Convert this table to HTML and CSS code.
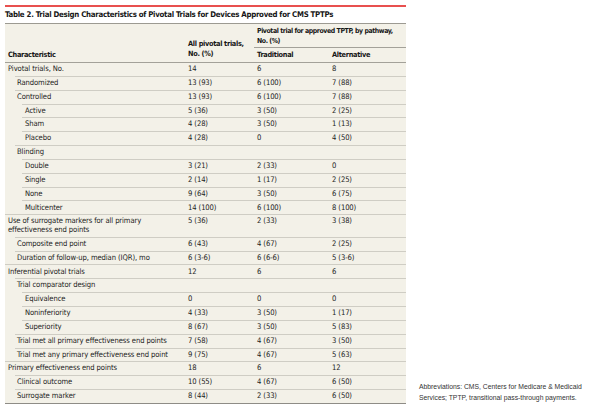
FILE: index.html
```html
<!DOCTYPE html>
<html lang="en">
<head>
<meta charset="utf-8">
<title>Table 2</title>
<link rel="stylesheet" href="styles.css">
</head>
<body>
<div class="page">
  <div class="figure">
    <div class="rule"></div>
    <div class="title">Table 2. Trial Design Characteristics of Pivotal Trials for Devices Approved for CMS TPTPs</div>
    <div class="table">
      <div class="thead">
        <div class="h-char">Characteristic</div>
        <div class="h-all">All pivotal trials,<br>No. (%)</div>
        <div class="h-group">Pivotal trial for approved TPTP, by pathway,<br>No. (%)</div>
        <div class="h-sub">Traditional</div>
        <div class="h-sub">Alternative</div>
      </div>
      <div class="row l0 first"><div class="c0">Pivotal trials, No.</div><div class="c">14</div><div class="c">6</div><div class="c">8</div></div>
      <div class="row l1"><div class="c0">Randomized</div><div class="c">13 (93)</div><div class="c">6 (100)</div><div class="c">7 (88)</div></div>
      <div class="row l1"><div class="c0">Controlled</div><div class="c">13 (93)</div><div class="c">6 (100)</div><div class="c">7 (88)</div></div>
      <div class="row l2"><div class="c0">Active</div><div class="c">5 (36)</div><div class="c">3 (50)</div><div class="c">2 (25)</div></div>
      <div class="row l2"><div class="c0">Sham</div><div class="c">4 (28)</div><div class="c">3 (50)</div><div class="c">1 (13)</div></div>
      <div class="row l2"><div class="c0">Placebo</div><div class="c">4 (28)</div><div class="c">0</div><div class="c">4 (50)</div></div>
      <div class="row l1"><div class="c0">Blinding</div><div class="c"></div><div class="c"></div><div class="c"></div></div>
      <div class="row l2"><div class="c0">Double</div><div class="c">3 (21)</div><div class="c">2 (33)</div><div class="c">0</div></div>
      <div class="row l2"><div class="c0">Single</div><div class="c">2 (14)</div><div class="c">1 (17)</div><div class="c">2 (25)</div></div>
      <div class="row l2"><div class="c0">None</div><div class="c">9 (64)</div><div class="c">3 (50)</div><div class="c">6 (75)</div></div>
      <div class="row l2"><div class="c0">Multicenter</div><div class="c">14 (100)</div><div class="c">6 (100)</div><div class="c">8 (100)</div></div>
      <div class="row l0"><div class="c0">Use of surrogate markers for all primary<br>effectiveness end points</div><div class="c">5 (36)</div><div class="c">2 (33)</div><div class="c">3 (38)</div></div>
      <div class="row l1"><div class="c0">Composite end point</div><div class="c">6 (43)</div><div class="c">4 (67)</div><div class="c">2 (25)</div></div>
      <div class="row l1"><div class="c0">Duration of follow-up, median (IQR), mo</div><div class="c">6 (3-6)</div><div class="c">6 (6-6)</div><div class="c">5 (3-6)</div></div>
      <div class="row l0"><div class="c0">Inferential pivotal trials</div><div class="c">12</div><div class="c">6</div><div class="c">6</div></div>
      <div class="row l1"><div class="c0">Trial comparator design</div><div class="c"></div><div class="c"></div><div class="c"></div></div>
      <div class="row l2"><div class="c0">Equivalence</div><div class="c">0</div><div class="c">0</div><div class="c">0</div></div>
      <div class="row l2"><div class="c0">Noninferiority</div><div class="c">4 (33)</div><div class="c">3 (50)</div><div class="c">1 (17)</div></div>
      <div class="row l2"><div class="c0">Superiority</div><div class="c">8 (67)</div><div class="c">3 (50)</div><div class="c">5 (83)</div></div>
      <div class="row l1"><div class="c0">Trial met all primary effectiveness end points</div><div class="c">7 (58)</div><div class="c">4 (67)</div><div class="c">3 (50)</div></div>
      <div class="row l1"><div class="c0">Trial met any primary effectiveness end point</div><div class="c">9 (75)</div><div class="c">4 (67)</div><div class="c">5 (63)</div></div>
      <div class="row l0"><div class="c0">Primary effectiveness end points</div><div class="c">18</div><div class="c">6</div><div class="c">12</div></div>
      <div class="row l1"><div class="c0">Clinical outcome</div><div class="c">10 (55)</div><div class="c">4 (67)</div><div class="c">6 (50)</div></div>
      <div class="row l1 last"><div class="c0">Surrogate marker</div><div class="c">8 (44)</div><div class="c">2 (33)</div><div class="c">6 (50)</div></div>
    </div>
  </div>
  <div class="note">Abbreviations: CMS, Centers for Medicare &amp; Medicaid<br>Services; TPTP, transitional pass-through payments.</div>
</div>
</body>
</html>
```
FILE: styles.css
```css
html, body {
  margin: 0;
  padding: 0;
  background: #ffffff;
}

body {
  font-family: "DejaVu Sans Condensed", "DejaVu Sans", "Liberation Sans", sans-serif;
  font-stretch: condensed;
  color: #1c1c1c;
}

.page {
  display: flex;
  align-items: flex-end;
  padding: 5px 0 0 5px;
}

.figure {
  width: 401px;
}

.rule {
  height: 2px;
  background: #e8504f;
}

.title {
  font-weight: bold;
  font-size: 7.8px;
  letter-spacing: -0.27px;
  line-height: 10px;
  padding: 3px 0 3px 0;
  color: #161616;
  white-space: nowrap;
}

.table {
  background: #f3f1e8;
  border-top: 1px solid #9c9a92;
  border-bottom: 1px solid #8e8c86;
  font-size: 7.6px;
  letter-spacing: -0.1px;
}

.thead {
  display: grid;
  grid-template-columns: 180px 69px 75px 77px;
  grid-template-rows: auto auto;
  border-bottom: 1px solid #a3a199;
  font-weight: bold;
  font-size: 7.3px;
  letter-spacing: -0.3px;
  color: #161616;
  line-height: 10px;
  white-space: nowrap;
}

.h-char {
  grid-column: 1;
  grid-row: 1 / span 2;
  align-self: end;
  padding: 0 0 2px 3px;
}

.h-all {
  grid-column: 2;
  grid-row: 1 / span 2;
  align-self: end;
  padding: 0 0 3px 3px;
}

.h-group {
  grid-column: 3 / span 2;
  grid-row: 1;
  padding: 2px 0 1px 3px;
  border-bottom: 1px solid #a3a199;
  font-size: 6.9px;
  letter-spacing: -0.4px;
}

.h-sub {
  grid-row: 2;
  padding: 2px 0 2px 3px;
}

.row {
  --m: 0px;
  display: grid;
  grid-template-columns: calc(180px - var(--m)) 69px 75px 77px;
  margin-left: var(--m);
  border-top: 1px solid #cfcdc4;
  line-height: 8.65px;
  white-space: nowrap;
}

.row.first {
  border-top: none;
}

.row > div {
  padding: 2.1px 0 2.1px 3px;
}

.l1 { --m: 10px; }
.l2 { --m: 17px; }

.l1 > .c0 { padding-left: 2px; }
.l2 > .c0 { padding-left: 3px; }

.note {
  margin-left: 13px;
  font-family: "Liberation Sans", sans-serif;
  font-stretch: normal;
  font-size: 6.8px;
  line-height: 11.5px;
  color: #333333;
  white-space: nowrap;
}
```
